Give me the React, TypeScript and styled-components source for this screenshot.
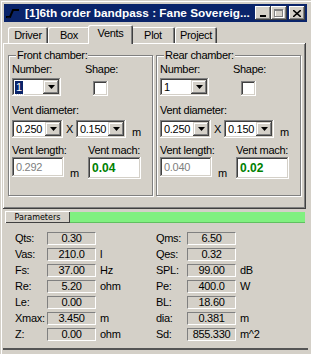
import React from "react";
import styled, { createGlobalStyle } from "styled-components";

const Global = createGlobalStyle`
  html, body { margin: 0; padding: 0; background: #d4d0c8; }
  body {
    font-family: "Liberation Sans", Arial, sans-serif;
    font-size: 11px;
    letter-spacing: -0.3px;
    color: #000;
  }
  * { box-sizing: border-box; }
`;

const raisedShadow =
  "inset -1px -1px #404040, inset 1px 1px #fff, inset -2px -2px #808080";
const sunkenShadow =
  "inset -1px -1px #fff, inset 1px 1px #808080, inset -2px -2px #d4d0c8, inset 2px 2px #404040";

const Window = styled.div`
  width: 311px;
  height: 354px;
  padding: 4px 4px 0 4px;
  background: #d4d0c8;
  box-shadow: inset 1px 1px #d4d0c8, inset 2px 2px #fff;
  display: flex;
  flex-direction: column;
  overflow: hidden;
`;

const TitleBar = styled.div`
  height: 18px;
  background: #0a246a;
  display: flex;
  align-items: center;
  padding: 0 2px 0 1px;
`;

const TitleText = styled.span`
  margin-left: 4px;
  color: #fff;
  font-weight: bold;
  font-size: 11.8px;
  letter-spacing: 0;
  white-space: nowrap;
  overflow: hidden;
  flex: 1;
`;

const CaptionButtons = styled.div`
  display: flex;
  align-items: center;
  margin-left: 4px;
`;

const CaptionButton = styled.div<{ $gap?: number }>`
  width: 16px;
  height: 14px;
  margin-left: ${(p) => p.$gap ?? 0}px;
  background: #d4d0c8;
  box-shadow: ${raisedShadow};
  display: flex;
  align-items: center;
  justify-content: center;
`;

const TabStrip = styled.div`
  height: 21px;
  display: flex;
  align-items: flex-end;
  padding-left: 4px;
  position: relative;
  z-index: 1;
`;

const Tab = styled.div<{ $w: number; $active?: boolean }>`
  width: ${(p) => p.$w}px;
  height: ${(p) => (p.$active ? 19 : 16)}px;
  margin-bottom: ${(p) => (p.$active ? -1 : 0)}px;
  margin-left: ${(p) => (p.$active ? -2 : 0)}px;
  margin-right: ${(p) => (p.$active ? -2 : 0)}px;
  background: #d4d0c8;
  border-radius: 2px 2px 0 0;
  box-shadow: inset 1px 1px #fff, inset -1px 0 #404040, inset -2px 0 #808080;
  display: flex;
  justify-content: center;
  padding-top: ${(p) => (p.$active ? 2 : 2)}px;
  line-height: 13px;
  position: relative;
  z-index: ${(p) => (p.$active ? 2 : 1)};
`;

const TabPanel = styled.div`
  margin-left: -1px;
  width: 303px;
  height: 166px;
  box-shadow: ${raisedShadow};
  display: flex;
  gap: 3px;
  padding: 12px 3px 0 5px;
`;

const Group = styled.div`
  position: relative;
  width: 145px;
  height: 141px;
  border: 1px solid #808080;
  box-shadow: inset 1px 1px #fff, 1px 1px #fff;
  padding: 7px 0 0 3px;
  display: flex;
  flex-direction: column;
`;

const Legend = styled.span`
  position: absolute;
  top: -7px;
  left: 7px;
  padding: 0 1px;
  background: #d4d0c8;
  line-height: 13px;
`;

const Row = styled.div<{ $mt: number }>`
  display: flex;
  align-items: flex-end;
  margin-top: ${(p) => p.$mt}px;
`;

const Label = styled.span<{ $w?: number }>`
  line-height: 13px;
  white-space: nowrap;
  ${(p) => (p.$w ? `width: ${p.$w}px;` : "")}
`;

const Combo = styled.div<{ $w: number; $h: number }>`
  width: ${(p) => p.$w}px;
  height: ${(p) => p.$h}px;
  background: #fff;
  box-shadow: ${sunkenShadow};
  display: flex;
  align-items: stretch;
  padding: 2px;
`;

const ComboText = styled.div`
  flex: 1;
  display: flex;
  align-items: center;
  padding-left: 2px;
  line-height: 13px;
`;

const Selected = styled.span`
  background: #0a246a;
  color: #fff;
  padding: 0 1px 0 1px;
  margin-left: -1px;
  outline: 1px dotted #fff;
`;

const DropButton = styled.div`
  width: 16px;
  background: #d4d0c8;
  box-shadow: inset -1px -1px #404040, inset 1px 1px #d4d0c8, inset -2px -2px #808080, inset 2px 2px #fff;
  display: flex;
  align-items: center;
  justify-content: center;
`;

const Check = styled.div`
  width: 15px;
  height: 15px;
  margin-left: 32px;
  margin-bottom: 0;
  background: #fff;
  box-shadow: ${sunkenShadow};
`;

const Times = styled.span`
  margin: 0 3px 0 3px;
  line-height: 13px;
  align-self: center;
`;

const Unit = styled.span<{ $ml: number }>`
  margin-left: ${(p) => p.$ml}px;
  line-height: 13px;
  margin-bottom: -1px;
`;

const Field = styled.div<{ $w: number; $h: number; $gray?: boolean; $bold?: boolean }>`
  width: ${(p) => p.$w}px;
  height: ${(p) => p.$h}px;
  background: #fff;
  box-shadow: ${sunkenShadow};
  display: flex;
  align-items: center;
  padding-left: 4px;
  color: ${(p) => (p.$gray ? "#808080" : p.$bold ? "#008000" : "#000")};
  font-weight: ${(p) => (p.$bold ? "bold" : "normal")};
  font-size: ${(p) => (p.$bold ? "12px" : "11px")};
  letter-spacing: ${(p) => (p.$bold ? "0" : "-0.3px")};
`;

const LengthCell = styled.div`
  width: 76px;
  display: flex;
  align-items: flex-end;
`;

const ParamHeader = styled.div`
  margin: 2px 2px 0 1px;
  height: 12px;
  display: flex;
`;

const ParamTab = styled.div`
  width: 65px;
  background: #d4d0c8;
  box-shadow: inset 1px 1px #fff, inset -1px -1px #404040;
  font-family: "DejaVu Sans", sans-serif;
  font-size: 8px;
  letter-spacing: 0;
  display: flex;
  align-items: center;
  justify-content: center;
  padding-top: 1px;
`;

const GreenBar = styled.div`
  flex: 1;
  background: #80f080;
  margin-top: 1px;
  border-bottom: 1px solid #60c060;
`;

const ParamBody = styled.div`
  flex: 1;
  display: grid;
  grid-template-columns: 141px 1fr;
  padding: 9px 0 0 12px;
  margin: 0 -1px;
  border-bottom: 2px solid #555;
  margin-bottom: 4px;
`;

const ParamCol = styled.div`
  display: flex;
  flex-direction: column;
  gap: 3px;
`;

const ParamRow = styled.div`
  display: flex;
  align-items: center;
  height: 13px;
`;

const ParamLabel = styled.span<{ $w: number }>`
  width: ${(p) => p.$w}px;
  line-height: 13px;
  white-space: nowrap;
`;

const ValueBox = styled.div`
  width: 49px;
  height: 13px;
  border-top: 1px solid #808080;
  border-left: 1px solid #808080;
  border-bottom: 1px solid #fff;
  border-right: 1px solid #fff;
  display: flex;
  align-items: center;
  justify-content: center;
  line-height: 11px;
`;

const ParamUnit = styled.span`
  margin-left: 4px;
  line-height: 13px;
`;

const Arrow = () => (
  <svg width="7" height="4" viewBox="0 0 7 4">
    <path d="M0 0h7L3.5 4z" fill="#000" />
  </svg>
);

const ComboBox = ({ w, h, value, sel }: { w: number; h: number; value: string; sel?: boolean }) => (
  <Combo $w={w} $h={h}>
    <ComboText>{sel ? <Selected>{value}</Selected> : value}</ComboText>
    <DropButton>
      <Arrow />
    </DropButton>
  </Combo>
);

const Chamber = ({ title, length, mach, sel }: { title: string; length: string; mach: string; sel?: boolean }) => (
  <Group>
    <Legend>{title}</Legend>
    <Row $mt={0}>
      <Label $w={73}>Number:</Label>
      <Label>Shape:</Label>
    </Row>
    <Row $mt={2}>
      <ComboBox w={49} h={18} value="1" sel={sel} />
      <Check />
    </Row>
    <Row $mt={8}>
      <Label>Vent diameter:</Label>
    </Row>
    <Row $mt={3}>
      <ComboBox w={51} h={18} value="0.250" />
      <Times>X</Times>
      <ComboBox w={50} h={18} value="0.150" />
      <Unit $ml={6}>m</Unit>
    </Row>
    <Row $mt={6}>
      <Label $w={76}>Vent length:</Label>
      <Label>Vent mach:</Label>
    </Row>
    <Row $mt={0}>
      <LengthCell>
        <Field $w={52} $h={20} $gray style={{ marginBottom: 2 }}>
          {length}
        </Field>
        <Unit $ml={6}>m</Unit>
      </LengthCell>
      <Field $w={53} $h={22} $bold>
        {mach}
      </Field>
    </Row>
  </Group>
);

const left: [string, string, string][] = [
  ["Qts:", "0.30", ""],
  ["Vas:", "210.0", "l"],
  ["Fs:", "37.00", "Hz"],
  ["Re:", "5.20", "ohm"],
  ["Le:", "0.00", ""],
  ["Xmax:", "3.450", "m"],
  ["Z:", "0.00", "ohm"],
];
const right: [string, string, string][] = [
  ["Qms:", "6.50", ""],
  ["Qes:", "0.32", ""],
  ["SPL:", "99.00", "dB"],
  ["Pe:", "400.0", "W"],
  ["BL:", "18.60", ""],
  ["dia:", "0.381", "m"],
  ["Sd:", "855.330", "m^2"],
];

const AppIcon = () => (
  <svg width="16" height="16" viewBox="0 0 16 16">
    <path d="M1 12h4l3-7h6" stroke="#000" strokeWidth="2" fill="none" />
    <path d="M2 13h3" stroke="#1a1a40" strokeWidth="1" />
  </svg>
);

export default function App() {
  return (
    <>
      <Global />
      <Window>
        <TitleBar>
          <AppIcon />
          <TitleText>[1]6th order bandpass : Fane Sovereig...</TitleText>
          <CaptionButtons>
            <CaptionButton>
              <svg width="8" height="7" viewBox="0 0 8 7">
                <rect x="1" y="5" width="6" height="2" fill="#000" />
              </svg>
            </CaptionButton>
            <CaptionButton>
              <svg width="10" height="9" viewBox="0 0 10 9">
                <rect x="1.5" y="1.5" width="8" height="7" fill="none" stroke="#fff" />
                <rect x="0.5" y="0.5" width="8" height="7" fill="none" stroke="#808080" />
                <rect x="0.5" y="1" width="8" height="1" fill="#808080" />
              </svg>
            </CaptionButton>
            <CaptionButton $gap={2}>
              <svg width="8" height="7" viewBox="0 0 8 7">
                <path d="M0 0l8 7M8 0L0 7" stroke="#000" strokeWidth="1.6" />
              </svg>
            </CaptionButton>
          </CaptionButtons>
        </TitleBar>
        <TabStrip>
          <Tab $w={40}>Driver</Tab>
          <Tab $w={42}>Box</Tab>
          <Tab $w={45} $active>
            Vents
          </Tab>
          <Tab $w={44}>Plot</Tab>
          <Tab $w={42}>Project</Tab>
        </TabStrip>
        <TabPanel>
          <Chamber title="Front chamber:" length="0.292" mach="0.04" sel />
          <Chamber title="Rear chamber:" length="0.040" mach="0.02" />
        </TabPanel>
        <ParamHeader>
          <ParamTab>Parameters</ParamTab>
          <GreenBar />
        </ParamHeader>
        <ParamBody>
          <ParamCol>
            {left.map(([l, v, u]) => (
              <ParamRow key={l}>
                <ParamLabel $w={32}>{l}</ParamLabel>
                <ValueBox>{v}</ValueBox>
                <ParamUnit>{u}</ParamUnit>
              </ParamRow>
            ))}
          </ParamCol>
          <ParamCol>
            {right.map(([l, v, u]) => (
              <ParamRow key={l}>
                <ParamLabel $w={31}>{l}</ParamLabel>
                <ValueBox>{v}</ValueBox>
                <ParamUnit>{u}</ParamUnit>
              </ParamRow>
            ))}
          </ParamCol>
        </ParamBody>
      </Window>
    </>
  );
}
